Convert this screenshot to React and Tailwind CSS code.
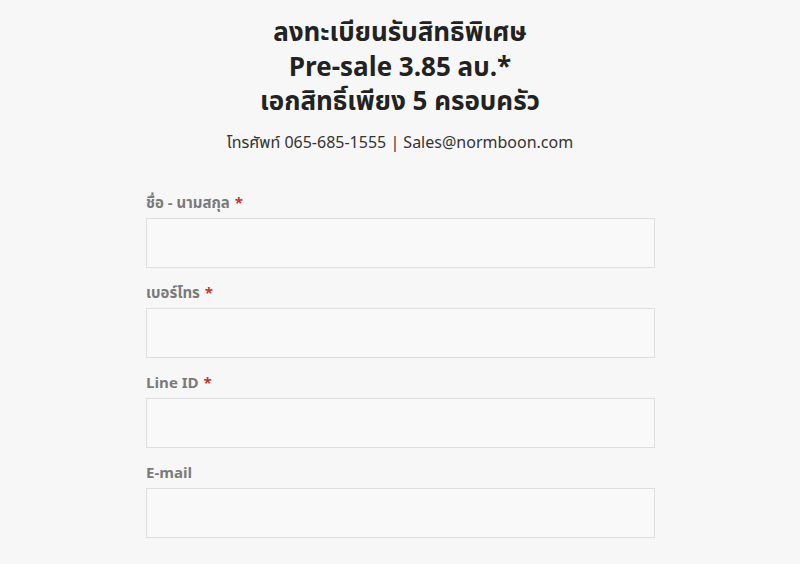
export default function App() {
  const fields = [
    { label: "ชื่อ - นามสกุล", req: true },
    { label: "เบอร์โทร", req: true },
    { label: "Line ID", req: true },
    { label: "E-mail", req: false },
  ];
  return (
    <div
      className="min-h-[564px] w-[800px] bg-[#f7f7f7] overflow-hidden"
      style={{ fontFamily: '"Noto Sans Thai", "Noto Sans", "Open Sans", sans-serif' }}
    >
      <div className="flex flex-col items-center pt-[16px]">
        <h1 className="text-center text-[26px] leading-[34.5px] font-bold text-[#222]">
          ลงทะเบียนรับสิทธิพิเศษ
          <br />
          Pre-sale 3.85 ลบ.*
          <br />
          เอกสิทธิ์เพียง 5 ครอบครัว
        </h1>
        <p className="mt-[12px] text-[16px] leading-[22px] text-[#333]">
          โทรศัพท์ 065-685-1555 | Sales@normboon.com
        </p>
      </div>
      <div className="ml-[146px] mt-[40px] w-[509px] flex flex-col gap-[16px]">
        {fields.map((f) => (
          <div key={f.label} className="flex flex-col gap-[5px]">
            <label className="text-[15px] leading-[19px] font-bold text-[#7a7a7a]">
              {f.label}
              {f.req && <span className="ml-[5px] text-[#c0392b]">*</span>}
            </label>
            <input className="h-[50px] w-full border border-[#dedede] bg-[#f9f9f9] outline-none" />
          </div>
        ))}
      </div>
    </div>
  );
}
